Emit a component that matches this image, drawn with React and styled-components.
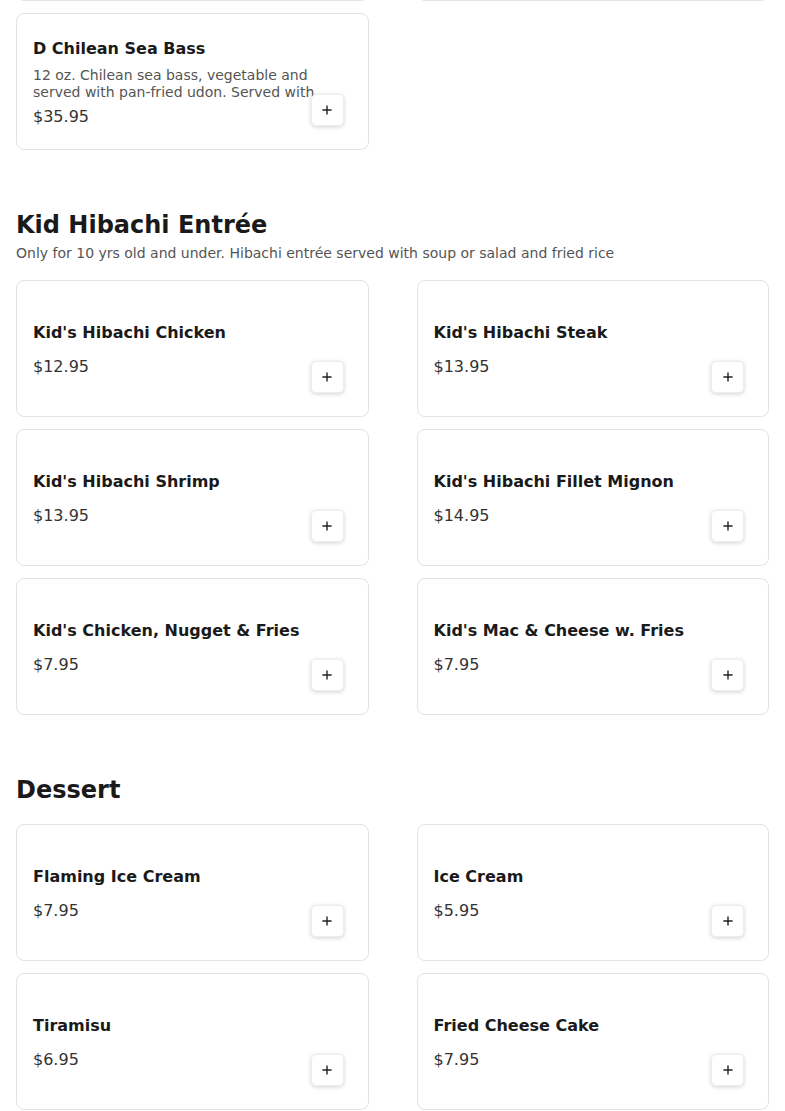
import styled, { createGlobalStyle } from "styled-components";
import { Plus } from "lucide-react";

const GlobalStyle = createGlobalStyle`
  html, body {
    margin: 0;
    padding: 0;
    background: #ffffff;
    font-family: "DejaVu Sans", "Noto Sans", sans-serif;
    color: #1a1a1a;
  }
  * {
    box-sizing: border-box;
  }
`;

const sections = [
  {
    id: "hibachi",
    items: [
      { name: "C Hibachi Salmon", desc: "Hibachi salmon with vegetable and fried rice.", price: "$24.95" },
      { name: "C Hibachi Scallop", desc: "Hibachi scallop with vegetable and fried rice.", price: "$26.95" },
      {
        name: "D Chilean Sea Bass",
        desc: "12 oz. Chilean sea bass, vegetable and served with pan-fried udon. Served with soup or salad.",
        price: "$35.95",
      },
    ],
  },
  {
    id: "kid",
    title: "Kid Hibachi Entrée",
    subtitle: "Only for 10 yrs old and under. Hibachi entrée served with soup or salad and fried rice",
    items: [
      { name: "Kid's Hibachi Chicken", price: "$12.95" },
      { name: "Kid's Hibachi Steak", price: "$13.95" },
      { name: "Kid's Hibachi Shrimp", price: "$13.95" },
      { name: "Kid's Hibachi Fillet Mignon", price: "$14.95" },
      { name: "Kid's Chicken, Nugget & Fries", price: "$7.95" },
      { name: "Kid's Mac & Cheese w. Fries", price: "$7.95" },
    ],
  },
  {
    id: "dessert",
    title: "Dessert",
    items: [
      { name: "Flaming Ice Cream", price: "$7.95" },
      { name: "Ice Cream", price: "$5.95" },
      { name: "Tiramisu", price: "$6.95" },
      { name: "Fried Cheese Cake", price: "$7.95" },
    ],
  },
];

export default function App() {
  return (
    <>
      <GlobalStyle />
      <Page>
        {sections.map((section) => (
          <Section key={section.id} $hasTitle={!!section.title}>
            {section.title && (
              <SectionHeader $hasSubtitle={!!section.subtitle}>
                <SectionTitle>{section.title}</SectionTitle>
                {section.subtitle && <SectionSubtitle>{section.subtitle}</SectionSubtitle>}
              </SectionHeader>
            )}
            <Grid>
              {section.items.map((item) => (
                <Card key={item.name}>
                  <ItemName>{item.name}</ItemName>
                  <ItemDesc>{item.desc}</ItemDesc>
                  <ItemPrice>{item.price}</ItemPrice>
                  <AddButton aria-label={`Add ${item.name}`}>
                    <Plus size={14} strokeWidth={2.4} />
                  </AddButton>
                </Card>
              ))}
            </Grid>
          </Section>
        ))}
      </Page>
    </>
  );
}

const Page = styled.main`
  padding: 0 16px 40px;
  margin-top: -136px;
`;

const Section = styled.section`
  padding-top: ${({ $hasTitle }) => ($hasTitle ? "61px" : "0")};
`;

const SectionHeader = styled.header`
  margin-bottom: ${({ $hasSubtitle }) => ($hasSubtitle ? "18px" : "20px")};
`;

const SectionTitle = styled.h2`
  margin: 0;
  font-size: 24px;
  line-height: 28px;
  font-weight: 700;
  color: #1a1a1a;
`;

const SectionSubtitle = styled.p`
  margin: 6px 0 0;
  font-size: 14px;
  line-height: 17px;
  color: #555555;
`;

const Grid = styled.div`
  display: grid;
  grid-template-columns: 1fr 1fr;
  column-gap: 48px;
  row-gap: 12px;
`;

const Card = styled.article`
  position: relative;
  height: 137px;
  display: flex;
  flex-direction: column;
  justify-content: center;
  padding: 2px 16px 0;
  border: 1px solid #e3e3e3;
  border-radius: 8px;
  background: #ffffff;
`;

const ItemName = styled.h3`
  margin: 0 0 8px;
  font-size: 16px;
  line-height: 20px;
  font-weight: 700;
  color: #1a1a1a;
`;

const ItemDesc = styled.p`
  margin: 0 0 6px;
  font-size: 14px;
  line-height: 17px;
  max-height: 34px;
  overflow: hidden;
  color: #555555;
  padding-right: 20px;
`;

const ItemPrice = styled.div`
  font-size: 16px;
  line-height: 20px;
  color: #333333;
`;

const AddButton = styled.button`
  position: absolute;
  right: 24px;
  bottom: 23px;
  width: 33px;
  height: 32px;
  display: flex;
  align-items: center;
  justify-content: center;
  padding: 0;
  border: 1px solid #eeeeee;
  border-radius: 5px;
  background: #ffffff;
  color: #222222;
  box-shadow: 0 1px 4px rgba(0, 0, 0, 0.18);
  cursor: pointer;
`;
